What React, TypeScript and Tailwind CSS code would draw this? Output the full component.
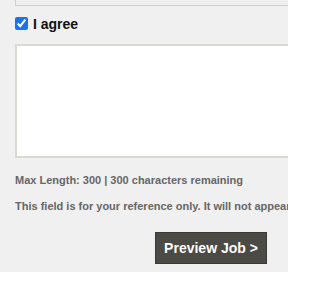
export default function App() {
  return (
    <div className="w-[288px] overflow-hidden bg-white font-['Liberation_Sans',Arial,sans-serif]">
      <div className="bg-[#f0f0f0] pb-[8px] pl-[15px]">
        {/* cut-off field above */}
        <div className="h-[6px] w-[300px] border-b border-l border-[#cfcfc7] bg-[#efefef]" />

        <label className="mt-[11px] flex h-[13px] items-center gap-[5px]">
          <input type="checkbox" defaultChecked className="m-0 h-[13px] w-[13px] accent-[#1a73e8]" />
          <span className="text-[14px] font-bold leading-none text-[#111]">I agree</span>
        </label>

        <textarea
          className="mt-[14px] block h-[114px] w-[300px] resize-none border-2 border-[#dad9d2] bg-white outline-none"
          maxLength={300}
        />

        <p className="mt-[16px] whitespace-nowrap text-[11px] font-bold leading-[13px] text-[#666]">
          Max Length: 300 | 300 characters remaining
        </p>
        <p className="mt-[13px] whitespace-nowrap text-[11px] font-bold leading-[13px] text-[#666]">
          This field is for your reference only. It will not appear on the job posting.
        </p>

        <button
          type="button"
          className="ml-[140px] mt-[19px] flex h-[32px] w-[112px] items-center justify-center border border-[#3a3935] bg-[#4b4a45] text-[14px] font-bold text-white"
        >
          Preview Job &gt;
        </button>
      </div>
    </div>
  );
}
